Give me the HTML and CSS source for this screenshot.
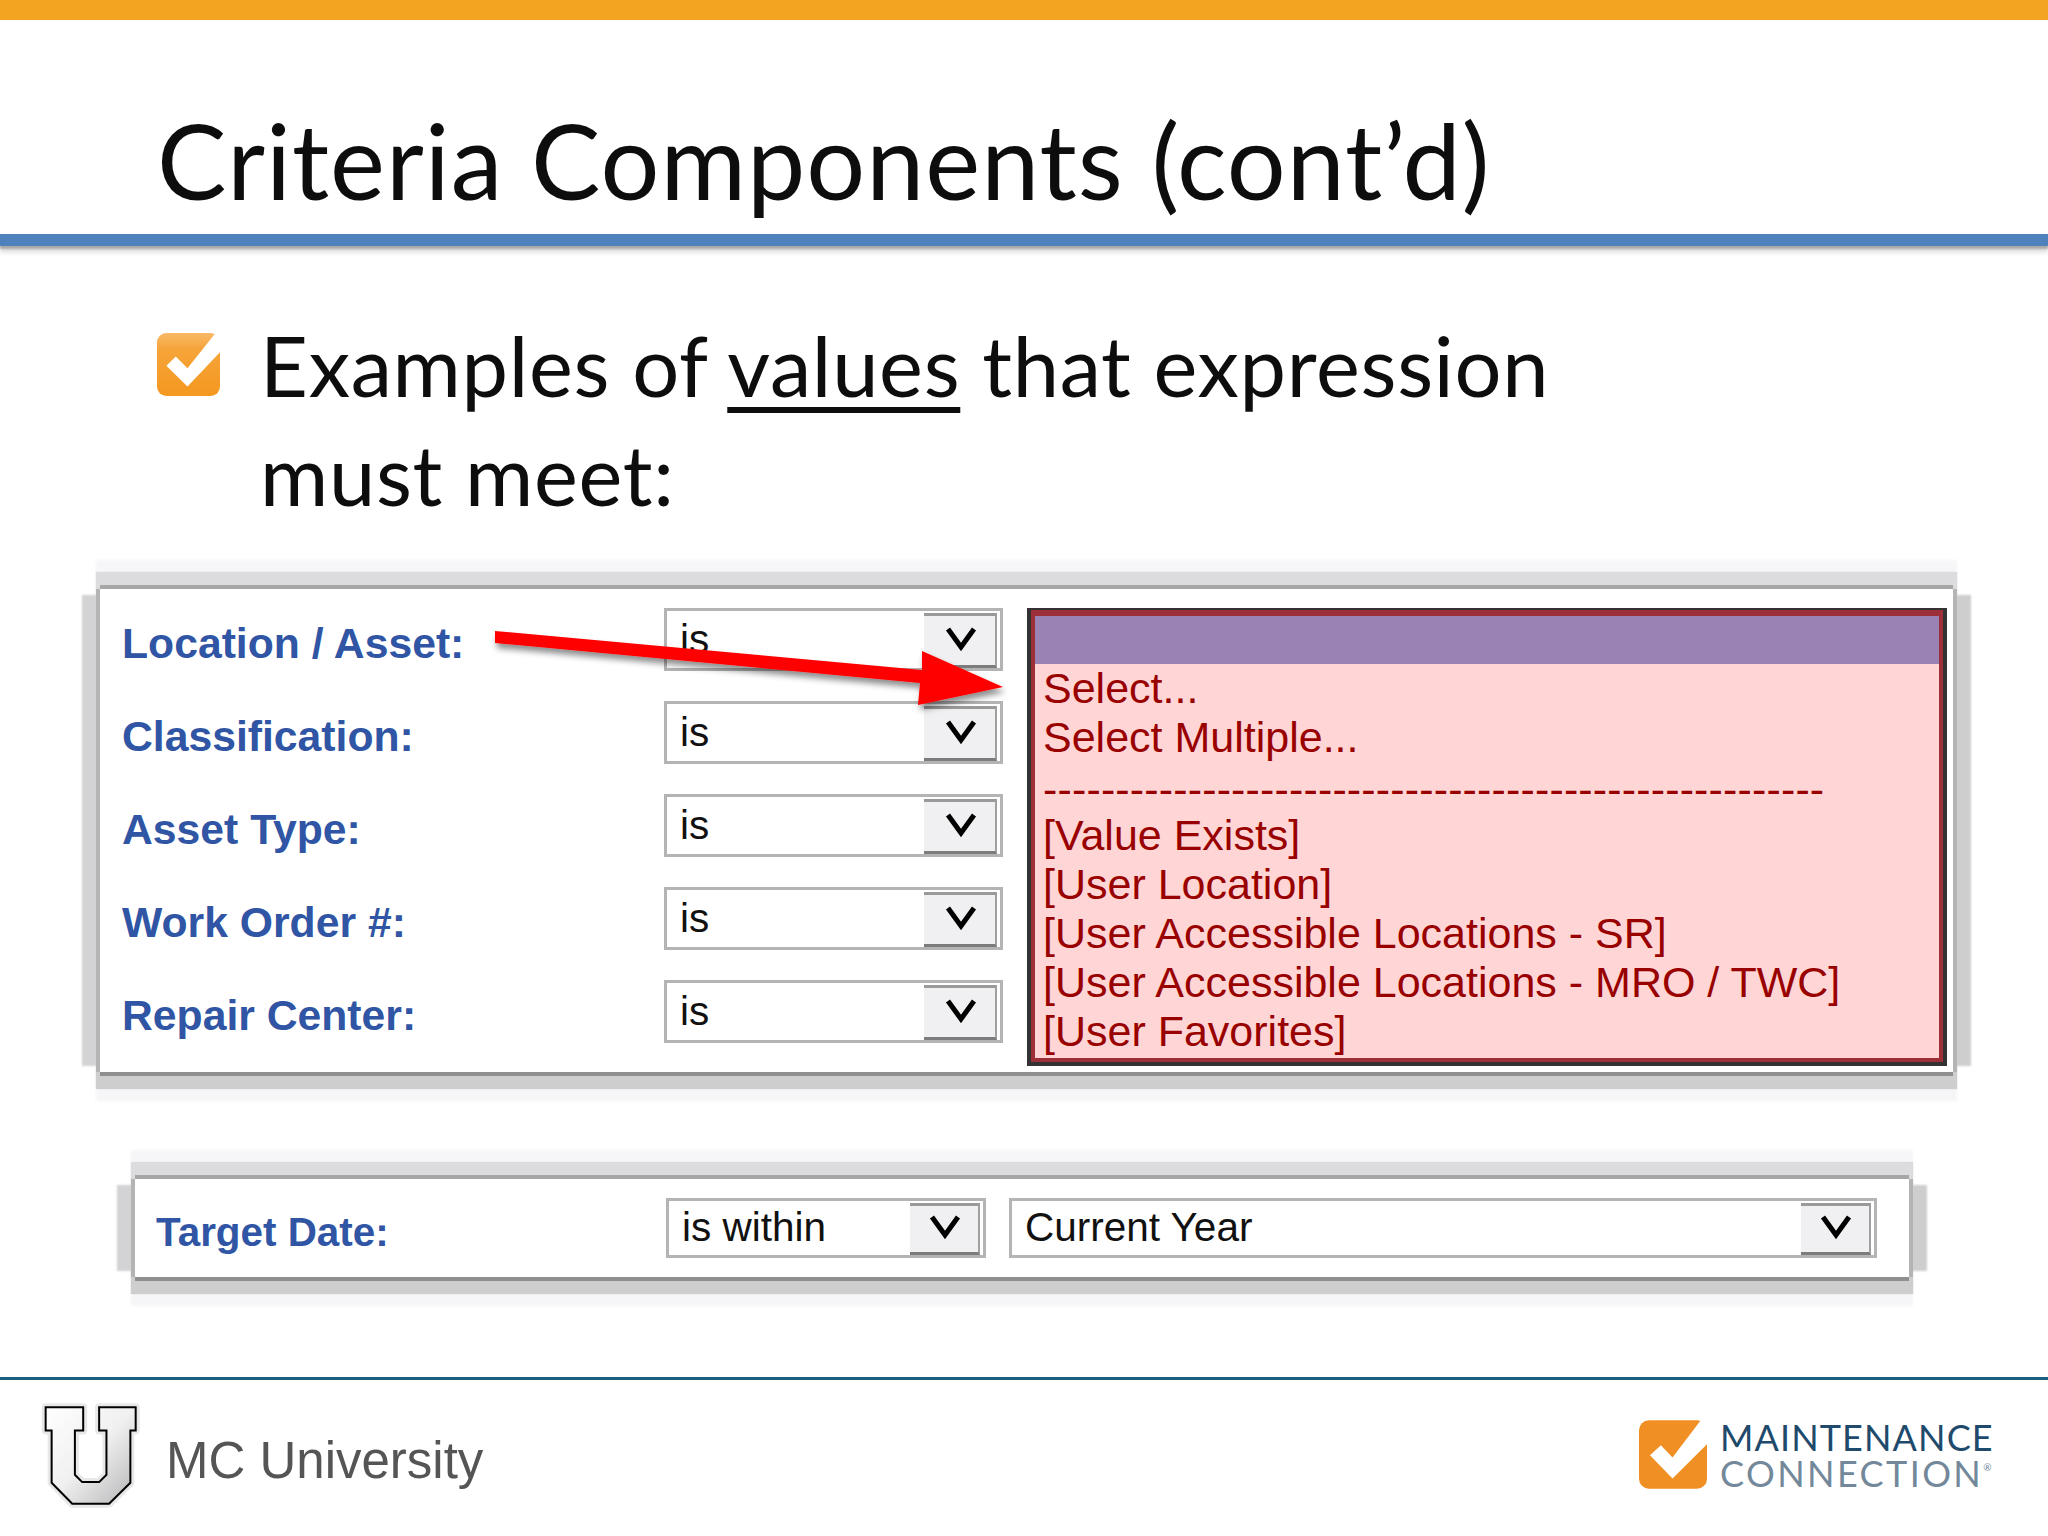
FILE: index.html
```html
<!DOCTYPE html>
<html lang="en">
<head>
<meta charset="utf-8">
<title>Criteria Components (cont'd)</title>
<link rel="stylesheet" href="styles.css">
</head>
<body>
<div class="slide">
  <div class="topbar"></div>
  <header class="head"><h1 class="title">Criteria Components (cont’d)</h1></header>
  <div class="rule"></div>

  <section class="bullet">
    <svg class="check" viewBox="52 70 188 188" aria-hidden="true">
      <defs>
        <linearGradient id="boxg" x1="0" y1="0" x2="0" y2="1">
          <stop offset="0" stop-color="#f8b968"/><stop offset=".25" stop-color="#f6a43a"/><stop offset="1" stop-color="#f4981f"/>
        </linearGradient>
      </defs>
      <rect x="52" y="70" width="188" height="188" rx="28" fill="url(#boxg)"/>
      <polygon points="80,168 108,140 143,175 225,72 242,68 242,125 143,230" fill="#fff"/>
    </svg>
    <p class="bullet-text">Examples of <u class="und">values</u> that expression<br>must meet:</p>
  </section>

  <section class="panel panel-main">
    <div class="fields">
      <div class="label">Location / Asset:</div>
      <div class="select"><span class="val">is</span><span class="btn"><svg class="chev" viewBox="0 0 32 24"><path d="M3 2 16 20 29 2"/></svg></span></div>
      <div class="label">Classification:</div>
      <div class="select"><span class="val">is</span><span class="btn"><svg class="chev" viewBox="0 0 32 24"><path d="M3 2 16 20 29 2"/></svg></span></div>
      <div class="label">Asset Type:</div>
      <div class="select"><span class="val">is</span><span class="btn"><svg class="chev" viewBox="0 0 32 24"><path d="M3 2 16 20 29 2"/></svg></span></div>
      <div class="label">Work Order #:</div>
      <div class="select"><span class="val">is</span><span class="btn"><svg class="chev" viewBox="0 0 32 24"><path d="M3 2 16 20 29 2"/></svg></span></div>
      <div class="label">Repair Center:</div>
      <div class="select"><span class="val">is</span><span class="btn"><svg class="chev" viewBox="0 0 32 24"><path d="M3 2 16 20 29 2"/></svg></span></div>
    </div>
    <div class="list">
      <div class="list-inner">
        <div class="list-head"></div>
        <div class="opt">Select...</div>
        <div class="opt">Select Multiple...</div>
        <div class="opt opt-sep">------------------------------------------------------</div>
        <div class="opt">[Value Exists]</div>
        <div class="opt">[User Location]</div>
        <div class="opt">[User Accessible Locations - SR]</div>
        <div class="opt">[User Accessible Locations - MRO / TWC]</div>
        <div class="opt">[User Favorites]</div>
      </div>
    </div>
    <svg class="arrow" viewBox="490 619 530 100" aria-hidden="true">
      <defs>
        <filter id="ash" x="-5%" y="-20%" width="110%" height="150%">
          <feDropShadow dx="2" dy="5" stdDeviation="3" flood-color="#000" flood-opacity=".45"/>
        </filter>
      </defs>
      <polygon points="495,631 922,670 922,651 1003,687 918,705 920,683 495,643" fill="#ff0000" filter="url(#ash)"/>
    </svg>
  </section>

  <section class="panel panel-date">
    <div class="label label-date">Target Date:</div>
    <div class="select select-op"><span class="val">is within</span><span class="btn"><svg class="chev" viewBox="0 0 32 24"><path d="M3 2 16 20 29 2"/></svg></span></div>
    <div class="select select-range"><span class="val">Current Year</span><span class="btn"><svg class="chev" viewBox="0 0 32 24"><path d="M3 2 16 20 29 2"/></svg></span></div>
  </section>

  <footer class="foot">
    <div class="brand">
      <svg class="ulogo" viewBox="120 120 310 340" aria-hidden="true">
        <defs>
          <linearGradient id="ug" x1="0" y1="0" x2="1" y2="1">
            <stop offset="0" stop-color="#ffffff"/><stop offset=".5" stop-color="#f0f0f1"/><stop offset="1" stop-color="#b4b4b6"/>
          </linearGradient>
        </defs>
        <path class="u-halo" d="M137 145H250V215H225V348L247 370H298L320 348V215H298V145H408V215H392V372L328 435H217L155 372V215H137Z"/>
        <path class="u-main" d="M137 145H250V215H225V348L247 370H298L320 348V215H298V145H408V215H392V372L328 435H217L155 372V215H137Z" fill="url(#ug)"/>
      </svg>
      <span class="brand-name">MC University</span>
    </div>
    <div class="mc">
      <svg class="mc-icon" viewBox="117 90 205 206" aria-hidden="true">
        <rect x="117" y="90" width="205" height="206" rx="30" fill="#f08f24"/>
        <polygon points="150,195 183,165 218,202 306,86 326,86 326,158 218,265" fill="#fff"/>
      </svg>
      <div class="mc-words">
        <span class="mc-top">MAINTENANCE</span>
        <span class="mc-bot">CONNECTION<sup class="reg">®</sup></span>
      </div>
    </div>
  </footer>
</div>
</body>
</html>
```
FILE: styles.css
```css
html, body { margin: 0; padding: 0; background: #fff; }
.slide { width: 2048px; height: 1536px; display: flex; flex-direction: column; overflow: hidden; position: relative; background: #fff; }

.topbar { height: 20px; background: #f3a521; flex: none; }

.head { height: 214px; flex: none; padding-left: 157px; display: flex; align-items: flex-end; box-sizing: border-box; }
.title { margin: 0 0 14px; font: 400 104px/120px "Lato", "Open Sans", sans-serif; letter-spacing: 1px; color: #0d0d0d; white-space: nowrap; }

.rule { height: 12px; flex: none; background: #4f81bd; box-shadow: 0 3px 2px #a9a9a9, 0 7px 4px #e4e4e4; }

.bullet { margin-top: 87px; padding-left: 157px; display: flex; align-items: flex-start; flex: none; }
.check { width: 63px; height: 63px; flex: none; }
.bullet-text { margin: -22px 0 0 40px; font: 400 83px/109px "Lato", "Open Sans", sans-serif; letter-spacing: .7px; color: #0d0d0d; white-space: nowrap; }
.und { text-decoration-thickness: 6px; text-underline-offset: 10px; }

.panel { position: relative; background: #fff; flex: none; box-sizing: border-box;
  box-shadow:
    0 4px 0 #8f8f90,
    0 -4px 0 #a6a6a6,
    4px 0 0 #b4b4b4,
    -4px 0 0 #b4b4b4,
    0 13px 1px 4px #cfcecf,
    0 -13px 1px 4px #dcdbdd,
    -24px 0 2px -6px #d3d2d4,
    24px 0 2px -6px #cfcecf,
    0 25px 3px 4px #f6f5f7,
    0 -25px 3px 4px #f6f5f7;
}
.panel-main { margin: 60px 0 0 100px; width: 1853px; height: 483px; padding: 19px 6px 0 22px; display: flex; align-items: flex-start; }
.panel-date { margin: 107px 0 0 135px; width: 1774px; height: 98px; padding: 19px 0 0 21px; display: flex; align-items: flex-start; }

.fields { width: 881px; flex: none; display: grid; grid-template-columns: 542px 339px; grid-auto-rows: 63px; row-gap: 30px; }

.label { font: 700 42.7px/1 "Liberation Sans", Arial, sans-serif; color: #2f55a4; white-space: nowrap; display: flex; align-items: center; padding-top: 8px; box-sizing: border-box; }
.label-date { width: 510px; height: 60px; flex: none; padding-top: 8px; font-size: 40.4px; }

.select { height: 63px; box-sizing: border-box; border: 3px solid #b4b4b4; background: #fff; display: flex; align-items: stretch; }
.select-op { width: 320px; height: 60px; flex: none; }
.select-range { width: 868px; height: 60px; flex: none; margin-left: 23px; }
.val { flex: 1; padding: 0 0 1px 13px; font: 400 40.5px/1 "Liberation Sans", Arial, sans-serif; color: #111; display: flex; align-items: center; white-space: nowrap; }
.btn { width: 73px; flex: none; box-sizing: border-box; background: #f0f0f2; border-top: 3px solid #9a9a9a; border-bottom: 3px solid #7c7c7c; border-right: 2px solid #a0a0a0; margin: 2px 3px 0 0; display: flex; align-items: center; justify-content: center; }
.select-op .btn, .select-range .btn { width: 70px; }
.chev { width: 32px; height: 24px; margin: 0 0 4px 2px; }
.chev path { fill: none; stroke: #000; stroke-width: 5; }

.list { margin-left: 24px; width: 920px; height: 458px; box-sizing: border-box; border: 4px solid #333; border-top-width: 2px; flex: none; }
.list-inner { height: 100%; box-sizing: border-box; border: 4px solid #9c2f38; border-top-width: 6px; background: #ffd5d5; }
.list-head { height: 48px; background: #9b82b5; }
.opt { padding-left: 8px; font: 400 43px/49px "Liberation Sans", Arial, sans-serif; color: #990000; white-space: nowrap; }
.opt-sep { padding-top: 3px; margin-bottom: -3px; letter-spacing: .15px; }

.arrow { position: absolute; left: 390px; top: 30px; width: 530px; height: 100px; overflow: visible; }

.foot { margin-top: 100px; flex: 1; border-top: 3px solid #1d5f7f; display: flex; justify-content: space-between; align-items: flex-start; padding: 0 55px 0 40px; }
.brand { display: flex; align-items: flex-start; padding-top: 19px; }
.ulogo { width: 103px; height: 113px; flex: none; overflow: visible; }
.u-halo { fill: #e8e8ea; stroke: #e8e8ea; stroke-width: 24; stroke-linejoin: round; }
.u-main { stroke: #000; stroke-width: 6; }
.brand-name { margin: 33px 0 0 23px; font: 400 51px/1.15 "Liberation Sans", Arial, sans-serif; color: #555; white-space: nowrap; }

.mc { display: flex; align-items: flex-start; padding-top: 39px; }
.mc-icon { width: 68px; height: 69px; flex: none; margin-top: 1px; }
.mc-words { margin-left: 13px; display: flex; flex-direction: column; width: 273px; }
.mc-top, .mc-bot { font: 400 36px/36px "Lato", sans-serif; white-space: nowrap; }
.mc-top { color: #1f4a6b; letter-spacing: 1.1px; }
.mc-bot { color: #73889a; letter-spacing: 2.4px; }
.reg { font-size: 10px; line-height: 0; vertical-align: 16px; letter-spacing: 0; }
```
